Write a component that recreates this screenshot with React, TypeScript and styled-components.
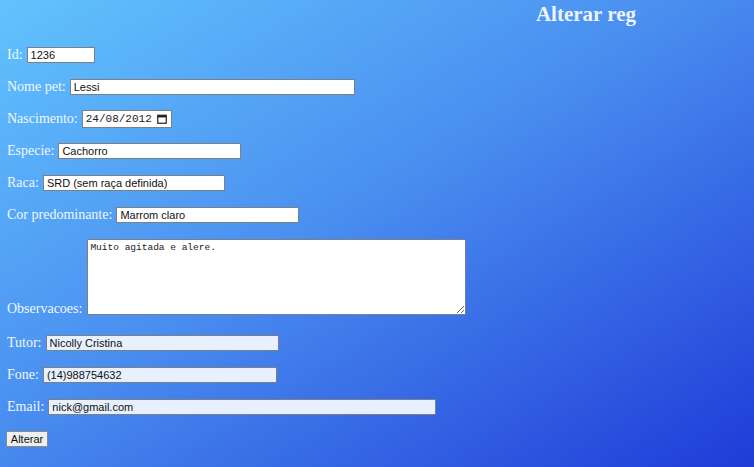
import React from "react";
import styled, { createGlobalStyle } from "styled-components";

const GlobalStyle = createGlobalStyle`
  html, body { margin: 0; padding: 0; }
  body { font-family: "Liberation Serif", "Times New Roman", serif; }
  * { box-sizing: border-box; }
`;

const Page = styled.div`
  width: 754px;
  height: 467px;
  overflow: hidden;
  background: linear-gradient(to bottom right, #62c3fd 0%, #4a8ff0 45%, #1f3bd8 100%);
  padding: 2px 0 0 7px;
`;

const Header = styled.div`
  display: flex;
  justify-content: center;
  padding-left: 411px;
`;

const Title = styled.h1`
  margin: 0;
  font-family: "Liberation Serif", "Times New Roman", serif;
  font-size: 21px;
  line-height: 24px;
  font-weight: bold;
  color: #eef3ff;
`;

const Form = styled.form`
  display: flex;
  flex-direction: column;
  align-items: flex-start;
  gap: 16px;
  margin-top: 21px;
`;

const Row = styled.div<{ $end?: boolean; $extra?: number }>`
  display: flex;
  align-items: ${(p) => (p.$end ? "flex-end" : "center")};
  gap: 4px;
  margin-bottom: ${(p) => p.$extra ?? 0}px;
`;

const Label = styled.label<{ $shift?: number }>`
  font-size: 14px;
  line-height: 16px;
  color: #f2f6ff;
  white-space: nowrap;
  margin-bottom: ${(p) => p.$shift ?? 0}px;
`;

const Field = styled.input<{ $w: number; $filled?: boolean }>`
  width: ${(p) => p.$w}px;
  height: 16px;
  margin: 0;
  padding: 0 3px;
  border: 1px solid #7a7f8c;
  background: ${(p) => (p.$filled ? "#e8f0fe" : "#ffffff")};
  font-family: "Liberation Sans", Arial, sans-serif;
  font-size: 11px;
  color: #111;
  outline: none;
`;

const DateBox = styled.div`
  width: 90px;
  height: 18px;
  margin: -1px 0;
  display: flex;
  align-items: center;
  justify-content: space-between;
  padding: 0 4px 0 3px;
  border: 1px solid #7a7f8c;
  background: #ffffff;
`;

const DateText = styled.input`
  width: 68px;
  border: none;
  padding: 0;
  margin: 0;
  background: transparent;
  font-family: "Liberation Mono", "Courier New", monospace;
  font-size: 11px;
  color: #222;
  outline: none;
`;

const Notes = styled.textarea`
  width: 379px;
  height: 76px;
  margin: 0 0 0 1px;
  padding: 2px 2px;
  border: 1px solid #7a7f8c;
  background: #ffffff;
  font-family: "Liberation Mono", "Courier New", monospace;
  font-size: 9.5px;
  color: #222;
  resize: both;
  outline: none;
`;

const Button = styled.button`
  height: 16px;
  width: 42px;
  margin: 0 0 0 -1px;
  padding: 0;
  border: 1px solid #8a8a8a;
  border-radius: 1px;
  background: #efefef;
  font-family: "Liberation Sans", Arial, sans-serif;
  font-size: 11px;
  line-height: 14px;
  color: #111;
`;

const CalendarIcon = () => (
  <svg width="10" height="10" viewBox="0 0 10 10" aria-hidden="true">
    <rect x="0.75" y="1.25" width="8.5" height="8" fill="none" stroke="#222" strokeWidth="1.2" />
    <rect x="0.75" y="1.25" width="8.5" height="2.2" fill="#222" />
  </svg>
);

export default function App() {
  return (
    <>
      <GlobalStyle />
      <Page>
        <Header>
          <Title>Alterar reg</Title>
        </Header>
        <Form onSubmit={(e) => e.preventDefault()}>
          <Row>
            <Label>Id:</Label>
            <Field $w={68} defaultValue="1236" />
          </Row>
          <Row>
            <Label>Nome pet:</Label>
            <Field $w={285} defaultValue="Lessi" />
          </Row>
          <Row>
            <Label>Nascimento:</Label>
            <DateBox>
              <DateText defaultValue="24/08/2012" />
              <CalendarIcon />
            </DateBox>
          </Row>
          <Row>
            <Label>Especie:</Label>
            <Field $w={183} defaultValue="Cachorro" />
          </Row>
          <Row>
            <Label>Raca:</Label>
            <Field $w={182} defaultValue="SRD (sem raça definida)" />
          </Row>
          <Row>
            <Label>Cor predominante:</Label>
            <Field $w={183} defaultValue="Marrom claro" />
          </Row>
          <Row $end $extra={4}>
            <Label $shift={-2}>Observacoes:</Label>
            <Notes defaultValue="Muito agitada e alere." spellCheck={false} />
          </Row>
          <Row>
            <Label>Tutor:</Label>
            <Field $w={233} $filled defaultValue="Nicolly Cristina" />
          </Row>
          <Row>
            <Label>Fone:</Label>
            <Field $w={234} $filled defaultValue="(14)988754632" />
          </Row>
          <Row>
            <Label>Email:</Label>
            <Field $w={388} $filled defaultValue="nick@gmail.com" />
          </Row>
          <Button type="submit">Alterar</Button>
        </Form>
      </Page>
    </>
  );
}
